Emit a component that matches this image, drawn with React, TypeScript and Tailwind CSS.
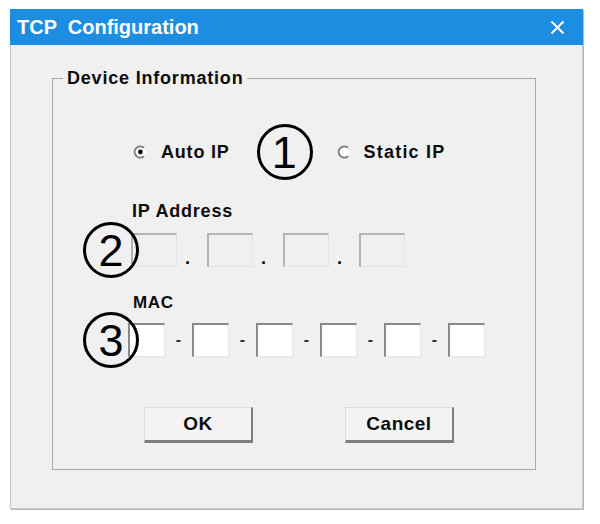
import type { ReactNode } from "react";

const font = "font-['Liberation_Sans',Arial,sans-serif]";

function Radio({ checked }: { checked?: boolean }) {
  return (
    <svg width="14" height="14" viewBox="0 0 14 14" className="shrink-0">
      <circle cx="7" cy="7" r="6" fill="#ffffff" />
      <path d="M11 2.8 A5.6 5.6 0 1 0 11 11.2" fill="none" stroke="#7d7d7d" strokeWidth="2" />
      {checked && <circle cx="7.4" cy="7" r="2.4" fill="#0d0d0d" />}
    </svg>
  );
}

function Marker({ n }: { n: number }) {
  return (
    <div className="flex h-[56px] w-[56px] shrink-0 items-center justify-center rounded-full border-[3px] border-black text-[45px] leading-none font-normal text-black">
      {n}
    </div>
  );
}

function Box({ w, disabled }: { w: string; disabled?: boolean }) {
  return (
    <div
      className={
        "h-[34px] shrink-0 border-t-2 border-l-2 border-r border-b border-r-[#e4e4e4] border-b-[#e4e4e4] " +
        w +
        (disabled ? " border-t-[#b4b4b4] border-l-[#b4b4b4] bg-[#f0f0f0]" : " border-t-[#8a8a8a] border-l-[#8a8a8a] bg-white")
      }
    />
  );
}

function Button({ children }: { children: ReactNode }) {
  return (
    <button className="flex h-[36px] w-[109px] items-center justify-center border-t border-l border-t-[#dcdcdc] border-l-[#dcdcdc] border-r-2 border-b-[3px] border-r-[#7e7e7e] border-b-[#7e7e7e] bg-[#f3f3f3] text-[19px] font-bold tracking-[0.5px] text-[#0d0d0d]">
      {children}
    </button>
  );
}

export default function App() {
  return (
    <div className={"min-h-[524px] bg-white pt-[9px] pl-[10px] " + font}>
      <div className="flex h-[500px] w-[573px] flex-col border border-t-0 border-[#c6c6c6] bg-[#f0f0f0] shadow-[1px_1px_0_#b8b8b8]">
        {/* title bar */}
        <div className="-mx-px flex h-[36px] items-center justify-between bg-[#1c8de0] pl-[7px] pr-[18px]">
          <span className="whitespace-pre text-[20px] font-bold leading-none text-white">TCP  Configuration</span>
          <svg width="15" height="15" viewBox="0 0 15 15">
            <path d="M1.5 1.5 L13.5 13.5 M13.5 1.5 L1.5 13.5" stroke="#ffffff" strokeWidth="2" />
          </svg>
        </div>

        <fieldset className="mt-[23px] ml-[41px] h-[402px] w-[484px] border border-[#a8a8a8] p-0 text-[#0d0d0d]">
          <legend className="ml-[10px] px-[4px] text-[18px] leading-[20px] font-bold tracking-[0.8px]">
            Device Information
          </legend>

          {/* mode */}
          <div className="mt-[37px] flex h-[54px] items-center pl-[80px] text-[18px] font-bold tracking-[0.8px]">
            <Radio checked />
            <span className="ml-[14px]">Auto IP</span>
            <div className="ml-[27px]">
              <Marker n={1} />
            </div>
            <div className="ml-[24px]">
              <Radio />
            </div>
            <span className="ml-[13px] tracking-[1.2px]">Static IP</span>
          </div>

          {/* ip address */}
          <div className="mt-[22px] pl-[79px] text-[18px] leading-[20px] font-bold tracking-[0.8px]">IP Address</div>
          <div className="relative mt-[12px] ml-[78px] flex h-[34px] items-end">
            {[0, 1, 2, 3].map((i) => (
              <div key={i} className="flex items-end">
                {i > 0 && <span className="w-[30px] pl-[8px] text-[18px] leading-[18px] font-bold">.</span>}
                <Box w="w-[46px]" disabled />
              </div>
            ))}
            <div className="absolute top-1/2 -left-[48px] -translate-y-1/2">
              <Marker n={2} />
            </div>
          </div>

          {/* mac */}
          <div className="mt-[26px] pl-[80px] text-[17px] leading-[20px] font-bold tracking-[0.6px]">MAC</div>
          <div className="relative mt-[10px] ml-[75px] flex h-[34px] items-center">
            {[0, 1, 2, 3, 4, 5].map((i) => (
              <div key={i} className="flex items-center">
                {i > 0 && <span className="w-[27px] text-center text-[16px] font-bold text-[#333]">-</span>}
                <Box w="w-[37px]" />
              </div>
            ))}
            <div className="absolute top-1/2 -left-[45px] -translate-y-1/2">
              <Marker n={3} />
            </div>
          </div>

          {/* actions */}
          <div className="mt-[50px] ml-[91px] flex gap-[92px]">
            <Button>OK</Button>
            <Button>Cancel</Button>
          </div>
        </fieldset>
      </div>
    </div>
  );
}
